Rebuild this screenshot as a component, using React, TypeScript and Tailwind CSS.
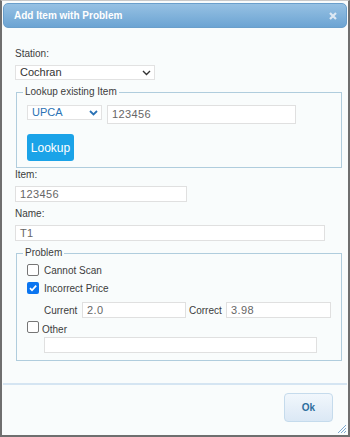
import React from "react";

function Chevron({ color, width = 1.4 }: { color: string; width?: number }) {
  return (
    <svg width="9" height="6" viewBox="0 0 9 6" fill="none">
      <polyline points="1,1 4.5,4.5 8,1" stroke={color} strokeWidth={width} />
    </svg>
  );
}

function Check({ checked }: { checked?: boolean }) {
  if (checked) {
    return (
      <span className="flex items-center justify-center w-[12px] h-[12px] rounded-[2px] bg-[#0b75f0] shrink-0">
        <svg width="10" height="10" viewBox="0 0 10 10" fill="none">
          <polyline points="2,5.2 4,7.3 8.2,2.6" stroke="white" strokeWidth="1.7" />
        </svg>
      </span>
    );
  }
  return <span className="block w-[12px] h-[12px] rounded-[2px] border border-[#767676] bg-white shrink-0" />;
}

function TextBox({ value, className }: { value?: string; className: string }) {
  return (
    <div className={`border border-[#e0e0e0] bg-white pl-[4px] flex items-center text-[11px] text-[#666] tracking-[0.4px] ${className}`}>
      {value}
    </div>
  );
}

export default function App() {
  return (
    <div className="relative w-[350px] h-[437px] flex flex-col bg-[#f9fcfc] border-x-2 border-b-2 border-x-[#6f6f6f] border-b-[#6f6f6f] border-t border-t-[#c9c9c9] font-['Liberation_Sans',Arial,sans-serif] text-[#3c3c3c]">
      {/* title bar */}
      <div className="mx-[1px] mt-[2px] h-[25px] rounded-[5px] border border-[#6a9fcb] bg-linear-to-b from-[#96c1e3] to-[#6ca4d3] flex items-center justify-between pl-[10px] pr-[9px]">
        <span className="text-[10px] font-bold text-white">Add Item with Problem</span>
        <svg width="8" height="8" viewBox="0 0 8 8">
          <path d="M1 1 L7 7 M7 1 L1 7" stroke="#dce8f3" strokeWidth="2.2" />
        </svg>
      </div>

      <div className="px-[13px]">
        <div className="mt-[19px] text-[10px] leading-[14px]">Station:</div>
        <div className="mt-[4px] w-[140px] h-[15px] border border-[#e2e2e2] bg-white flex items-center justify-between pl-[4px] pr-[3px] text-[11px] text-[#333]">
          <span>Cochran</span>
          <Chevron color="#333" />
        </div>

        {/* lookup */}
        <fieldset className="mt-[5px] ml-[1px] w-[326px] border border-[#b0cddd] px-[10px] pt-[6px] pb-[6px]">
          <legend className="-ml-[4px] px-[2px] text-[10px] leading-[14px]">Lookup existing Item</legend>
          <div className="flex items-start gap-[5px]">
            <div className="w-[75px] h-[15px] border border-[#e2e2e2] bg-white flex items-center justify-between pl-[4px] pr-[3px] text-[11px] text-[#2a72b5]">
              <span>UPCA</span>
              <Chevron color="#2a72b5" width={1.8} />
            </div>
            <TextBox value="123456" className="w-[189px] h-[19px]" />
          </div>
          <button className="block mt-[10px] w-[47px] h-[27px] rounded-[3px] bg-[#1ba3e8] text-white text-[12px]">
            Lookup
          </button>
        </fieldset>

        <div className="text-[10px] leading-[14px]">Item:</div>
        <TextBox value="123456" className="mt-[4px] w-[172px] h-[16px]" />
        <div className="mt-[5px] text-[10px] leading-[14px]">Name:</div>
        <TextBox value="T1" className="mt-[4px] w-[310px] h-[16px]" />

        {/* problem */}
        <fieldset className="mt-[5px] ml-[1px] w-[326px] border border-[#b0cddd] pl-[10px] pt-[3px] pb-[7px] text-[10px]">
          <legend className="-ml-[4px] px-[2px] leading-[14px]">Problem</legend>
          <div className="flex items-center gap-[5px] h-[14px]">
            <Check />
            <span>Cannot Scan</span>
          </div>
          <div className="mt-[4px] flex items-center gap-[5px] h-[14px]">
            <Check checked />
            <span>Incorrect Price</span>
          </div>
          <div className="mt-[7px] ml-[17px] flex items-center h-[16px]">
            <span className="w-[38px]">Current</span>
            <TextBox value="2.0" className="w-[104px] h-[16px]" />
            <span className="ml-[3px] w-[37px]">Correct</span>
            <TextBox value="3.98" className="w-[105px] h-[16px]" />
          </div>
          <div className="mt-[1px] flex items-start gap-[3px] h-[18px]">
            <span className="mt-[2px]">
              <Check />
            </span>
            <span className="mt-[4px] leading-[14px]">Other</span>
          </div>
          <TextBox className="ml-[17px] w-[273px] h-[16px]" />
        </fieldset>
      </div>

      {/* footer */}
      <div className="mt-auto">
        <div className="mx-[1px] h-[2px] bg-[#d5e5f2]" />
        <div className="flex justify-end pt-[8px] pr-[15px] pb-[13px]">
          <button className="w-[49px] h-[29px] rounded-[4px] border border-[#c5dbec] bg-linear-to-b from-[#f1f7fc] to-[#dbe8f5] text-[#2e6e9e] font-bold text-[10px]">
            Ok
          </button>
        </div>
      </div>

      <svg className="absolute right-[1px] bottom-[1px]" width="11" height="11" viewBox="0 0 11 11">
        <path d="M10 2 L2 10 M10 5 L5 10 M10 8 L8 10" stroke="#7ea8cf" strokeWidth="1" />
      </svg>
    </div>
  );
}
